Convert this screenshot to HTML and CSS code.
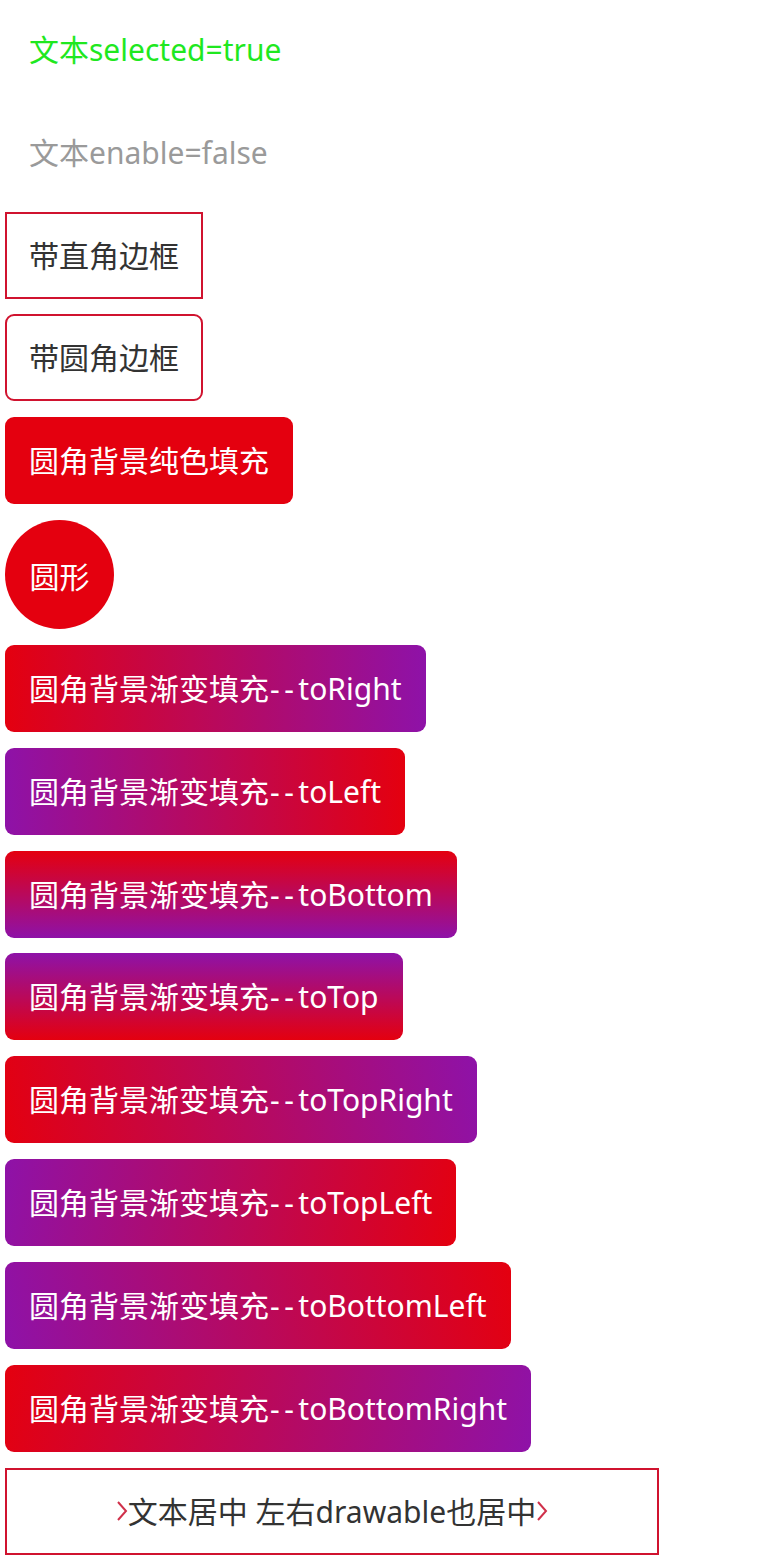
FILE: index.html
```html
<!DOCTYPE html>
<html lang="zh">
<head>
<meta charset="utf-8">
<link rel="stylesheet" href="styles.css">
</head>
<body>
<main class="list">
  <div class="item txt-selected">文本selected=true</div>
  <div class="item txt-disabled">文本enable=false</div>
  <div class="item bordered">带直角边框</div>
  <div class="item bordered rounded">带圆角边框</div>
  <div class="item filled rounded">圆角背景纯色填充</div>
  <div class="circle">圆形</div>
  <div class="item grad rounded g-right">圆角背景渐变填充<span class="dash">--</span>toRight</div>
  <div class="item grad rounded g-left">圆角背景渐变填充<span class="dash">--</span>toLeft</div>
  <div class="item grad rounded g-bottom">圆角背景渐变填充<span class="dash">--</span>toBottom</div>
  <div class="item grad rounded g-top">圆角背景渐变填充<span class="dash">--</span>toTop</div>
  <div class="item grad rounded g-topright">圆角背景渐变填充<span class="dash">--</span>toTopRight</div>
  <div class="item grad rounded g-topleft">圆角背景渐变填充<span class="dash">--</span>toTopLeft</div>
  <div class="item grad rounded g-bottomleft">圆角背景渐变填充<span class="dash">--</span>toBottomLeft</div>
  <div class="item grad rounded g-bottomright">圆角背景渐变填充<span class="dash">--</span>toBottomRight</div>
  <div class="item bordered wide">
    <svg class="chev" width="12" height="22" viewBox="0 0 12 22"><polyline points="2,2 10,11 2,20" fill="none" stroke="#d0304a" stroke-width="2"/></svg>
    <span>文本居中 左右drawable也居中</span>
    <svg class="chev" width="12" height="22" viewBox="0 0 12 22"><polyline points="2,2 10,11 2,20" fill="none" stroke="#d0304a" stroke-width="2"/></svg>
  </div>
</main>
</body>
</html>
```
FILE: styles.css
```css
html, body {
  margin: 0;
  padding: 0;
  background: #ffffff;
}
body {
  font-family: "Noto Sans", "Noto Sans CJK SC", sans-serif;
  font-size: 30px;
  color: #333333;
}
.list {
  display: flex;
  flex-direction: column;
  align-items: flex-start;
  gap: 15.83px;
  padding: 6px 0 0 5px;
}
.item {
  box-sizing: border-box;
  height: 87px;
  padding: 0 24px;
  line-height: 39px;
  display: flex;
  align-items: center;
  white-space: nowrap;
}
.txt-selected { color: #1fe81f; }
.txt-disabled { color: #9a9a9a; }
.bordered {
  border: 2px solid #d0132f;
  padding: 0 22px;
}
.rounded { border-radius: 9px; }
.filled {
  background: #e4000f;
  color: #ffffff;
}
.circle {
  width: 109px;
  height: 109px;
  border-radius: 50%;
  background: #e4000f;
  color: #ffffff;
  display: flex;
  align-items: center;
  justify-content: center;
}
.grad { color: #ffffff; }
.dash {
  letter-spacing: 4.5px;
  padding-left: 1px;
}
.g-right { background: linear-gradient(to right, #e4000f, #8e12a8); }
.g-left { background: linear-gradient(to left, #e4000f, #8e12a8); }
.g-bottom { background: linear-gradient(to bottom, #e4000f, #8e12a8); }
.g-top { background: linear-gradient(to top, #e4000f, #8e12a8); }
.g-topright { background: linear-gradient(80deg, #e4000f, #8e12a8); }
.g-topleft { background: linear-gradient(280deg, #e4000f, #8e12a8); }
.g-bottomleft { background: linear-gradient(260deg, #e4000f, #8e12a8); }
.g-bottomright { background: linear-gradient(100deg, #e4000f, #8e12a8); }
.wide {
  width: 654px;
  justify-content: center;
  gap: 0;
}
.chev { display: block; }
```
